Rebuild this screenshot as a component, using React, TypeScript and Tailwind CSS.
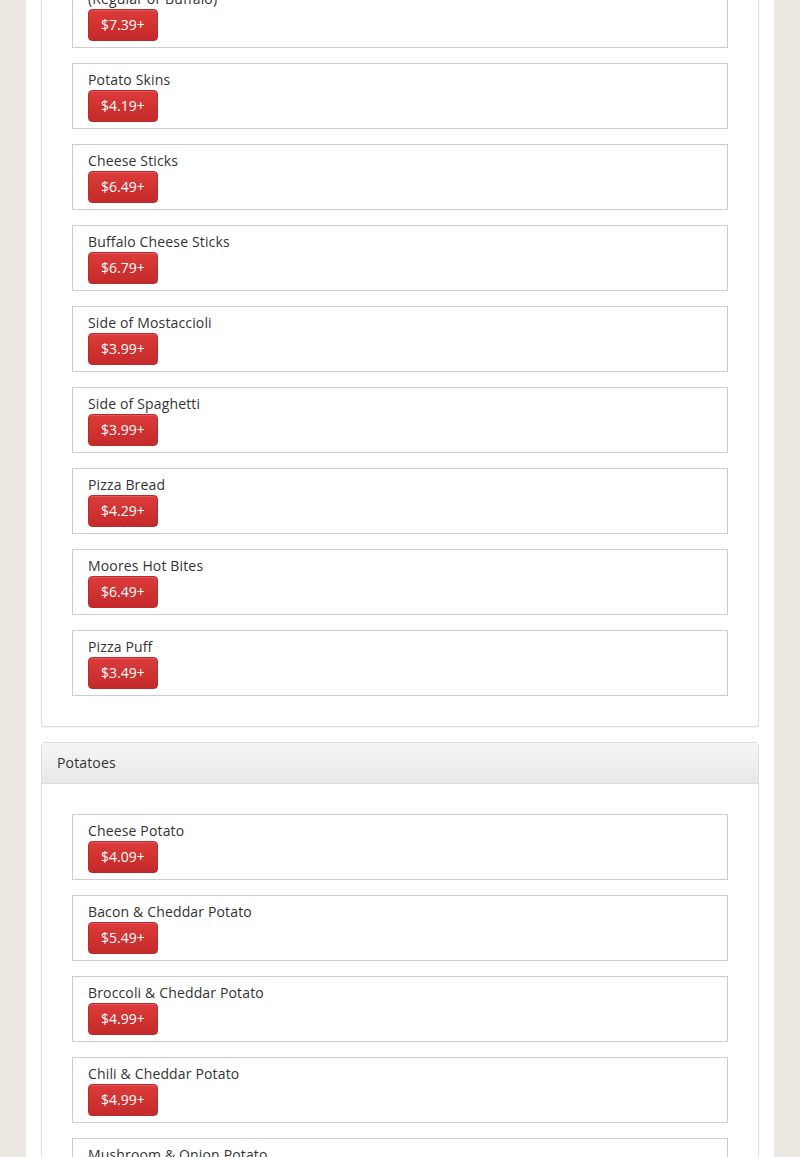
import React from 'react';

interface MenuItem {
    name: string;
    price: string;
}

const appetizers: MenuItem[] = [
    { name: 'Chicken Wings\n(Regular or Buffalo)', price: '$7.39+' },
    { name: 'Potato Skins', price: '$4.19+' },
    { name: 'Cheese Sticks', price: '$6.49+' },
    { name: 'Buffalo Cheese Sticks', price: '$6.79+' },
    { name: 'Side of Mostaccioli', price: '$3.99+' },
    { name: 'Side of Spaghetti', price: '$3.99+' },
    { name: 'Pizza Bread', price: '$4.29+' },
    { name: 'Moores Hot Bites', price: '$6.49+' },
    { name: 'Pizza Puff', price: '$3.49+' },
];

const potatoes: MenuItem[] = [
    { name: 'Cheese Potato', price: '$4.09+' },
    { name: 'Bacon & Cheddar Potato', price: '$5.49+' },
    { name: 'Broccoli & Cheddar Potato', price: '$4.99+' },
    { name: 'Chili & Cheddar Potato', price: '$4.99+' },
    { name: 'Mushroom & Onion Potato', price: '$4.99+' },
];

const Item: React.FC<{ item: MenuItem; first?: boolean }> = ({ item, first }) => (
    <div className={`border border-[#cccccc] bg-white px-[15px] pt-[6px] pb-[6px] ${first ? 'mt-[-38px]' : 'mt-[15px]'}`}>
        <div className="text-[14px] leading-[20px] tracking-[0.15px] text-[#333333] whitespace-pre-line">{item.name}</div>
        <button className="h-[32px] px-[12px] rounded-[4px] border border-[#b92a2a] bg-gradient-to-b from-[#dc3b3b] to-[#c52929] text-[14px] leading-[20px] text-white shadow-[inset_0_1px_0_rgba(255,255,255,0.15)]">
            {item.price}
        </button>
    </div>
);

export default function App() {
    return (
        <div className="h-[1157px] overflow-hidden bg-[#ebe8e2] px-[26px] font-['Open_Sans',sans-serif]">
            <div className="min-h-full bg-white px-[15px] pb-[40px]">
                {/* Appetizers panel, header scrolled off the top */}
                <div className="border border-t-0 border-[#dddddd] rounded-b-[4px] bg-white px-[30px] pb-[30px] shadow-[0_1px_1px_rgba(0,0,0,0.05)]">
                    {appetizers.map((it, i) => (
                        <Item key={it.name} item={it} first={i === 0} />
                    ))}
                </div>

                <div className="mt-[15px] border border-[#dddddd] rounded-[4px] bg-white shadow-[0_1px_1px_rgba(0,0,0,0.05)]">
                    <div className="border-b border-[#dddddd] rounded-t-[3px] bg-gradient-to-b from-[#f5f5f5] to-[#e8e8e8] px-[15px] py-[10px] text-[14px] leading-[20px] tracking-[0.15px] text-[#333333]">
                        Potatoes
                    </div>
                    <div className="px-[30px] pt-[15px] pb-[30px]">
                        {potatoes.map(it => (
                            <Item key={it.name} item={it} />
                        ))}
                    </div>
                </div>
            </div>
        </div>
    );
}
